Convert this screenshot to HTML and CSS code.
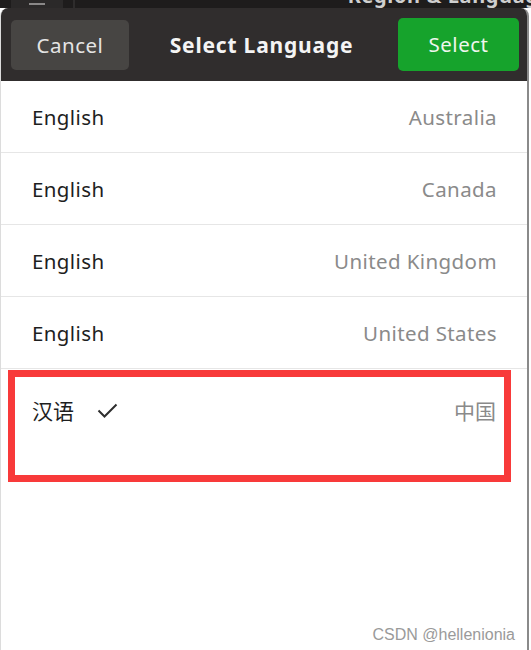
FILE: index.html
```html
<!DOCTYPE html>
<html>

	<head>
		<meta charset="UTF-8">
		<title>Select Language</title>
		<link rel="stylesheet" href="styles.css">
	</head>

	<body>
		<div class="topStrip">
			<div class="menuBtn"><span class="menuLine"></span></div>
			<div class="stripSep"></div>
			<div class="stripTitle">Region &amp; Language</div>
		</div>

		<div class="dialog">
			<div class="dlgHead">
				<button class="btn btnCancel">Cancel</button>
				<div class="dlgTitle">Select Language</div>
				<button class="btn btnSelect">Select</button>
			</div>

			<ul class="langList">
				<li class="langRow"><span class="langName">English</span><span class="langRegion">Australia</span></li>
				<li class="langRow"><span class="langName">English</span><span class="langRegion">Canada</span></li>
				<li class="langRow"><span class="langName">English</span><span class="langRegion">United Kingdom</span></li>
				<li class="langRow"><span class="langName">English</span><span class="langRegion">United States</span></li>
				<li class="langRow current">
					<div class="markBox">
						<span class="langName cjk">汉语</span>
						<svg class="check" width="21" height="15" viewBox="0 0 21 15">
							<polyline points="1.5,7.5 7.5,13.5 19.5,1.5" fill="none" stroke="#2e2e2e" stroke-width="2" />
						</svg>
						<span class="langRegion cjk">中国</span>
					</div>
				</li>
			</ul>
		</div>

		<div class="watermark">CSDN @hellenionia</div>
	</body>

</html>
```

FILE: styles.css
```css
body {
	margin: 0;
	padding: 0;
	width: 531px;
	height: 650px;
	overflow: hidden;
	background: #fff;
	font-family: "Noto Sans", "Noto Sans CJK SC", sans-serif;
	position: relative;
}

.topStrip {
	height: 8px;
	background: #1e1c1c;
	display: flex;
	overflow: hidden;
}

.menuBtn {
	width: 52px;
	margin-left: 11px;
	background: #2b2929;
	display: flex;
	justify-content: center;
}

.menuLine {
	width: 16px;
	height: 2px;
	margin-top: 3px;
	background: #8a8888;
}

.stripSep {
	width: 2px;
	margin-left: 10px;
	background: #2e2c2c;
}

.stripTitle {
	margin-left: auto;
	margin-top: -14px;
	margin-right: -20px;
	color: #cfcfcf;
	font-weight: bold;
	font-size: 20px;
	line-height: 20px;
	letter-spacing: 0.6px;
	white-space: nowrap;
}

.dialog {
	width: 529px;
	height: 642px;
	background: #fff;
	border-left: 1px solid #dcdcdc;
	border-right: 2px solid #8a8a8a;
	box-sizing: border-box;
	border-top-left-radius: 8px;
	border-top-right-radius: 8px;
	overflow: hidden;
}

.dlgHead {
	height: 73px;
	background: #302d2d;
	display: flex;
	align-items: center;
	padding: 0 8px 0 10px;
}

.btn {
	border: none;
	font-family: inherit;
	font-size: 20.5px;
	letter-spacing: 0.5px;
	padding: 0;
}

.btnCancel {
	width: 118px;
	height: 50px;
	border-radius: 5px;
	background: #474543;
	color: #e4e4e4;
}

.btnSelect {
	width: 121px;
	height: 53px;
	margin-bottom: 1px;
	border-radius: 5px;
	background: #16a32c;
	color: #eef6ee;
}

.dlgTitle {
	flex: 1;
	text-align: center;
	color: #f4f4f4;
	font-weight: bold;
	font-size: 21px;
	letter-spacing: 0.8px;
	padding-right: 4px;
}

.langList {
	list-style: none;
	margin: 0;
	padding: 0;
}

.langRow {
	height: 71px;
	border-bottom: 1px solid #e6e6e6;
	display: flex;
	align-items: center;
	justify-content: space-between;
	padding: 0 30px 0 31px;
}

.langName {
	color: #1e1e1e;
	font-size: 20.5px;
	letter-spacing: 0.4px;
}

.langRegion {
	color: #8a8a8a;
	font-size: 20.5px;
	letter-spacing: 0.4px;
}

.langRow.current {
	border-bottom: none;
	height: auto;
	padding: 1px 0 0 7px;
	display: block;
}

.markBox {
	height: 79px;
	border: 7px solid #f83a3a;
	margin-right: 16px;
	display: flex;
	align-items: flex-start;
	padding: 19px 8px 0 17px;
	box-sizing: content-box;
}

.cjk {
	font-size: 21px;
	line-height: 30px;
	letter-spacing: 0;
}

.check {
	margin: 7px 0 0 23px;
}

.markBox .langRegion {
	margin-left: auto;
}

.watermark {
	position: absolute;
	right: 16px;
	bottom: 6px;
	font-family: "Liberation Sans", Arial, sans-serif;
	font-size: 16px;
	color: #9a9a9a;
}
```
